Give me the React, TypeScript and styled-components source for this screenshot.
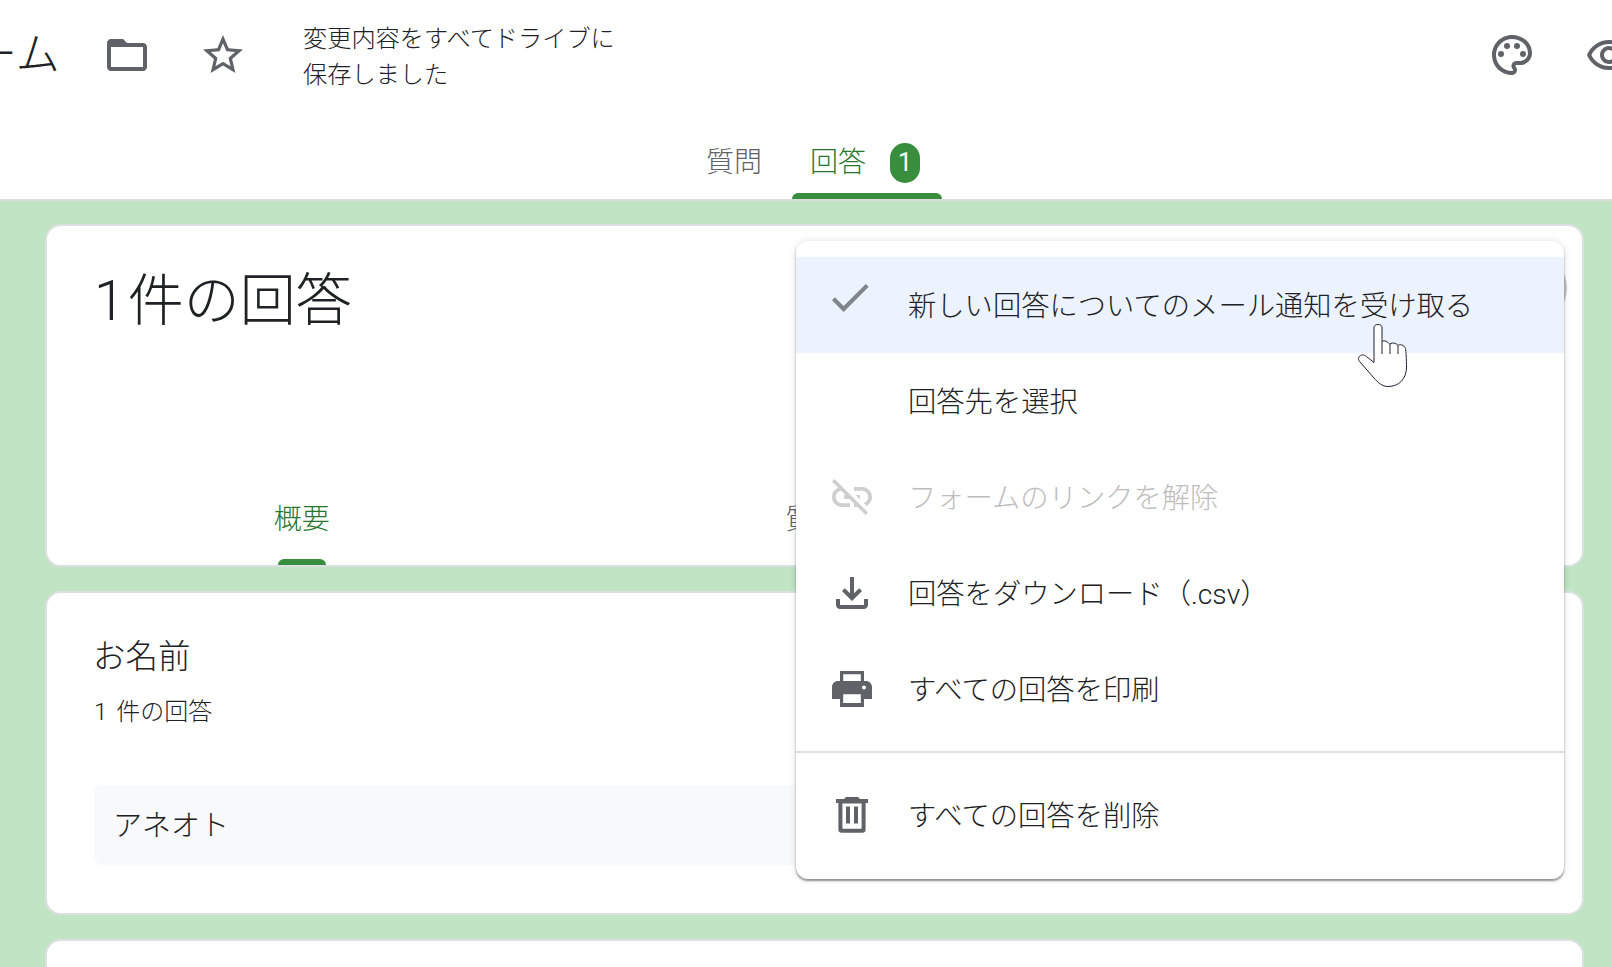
import * as React from "react";
import styled, { createGlobalStyle } from "styled-components";

const VERT = "#388e3c";
const VERT_TEXTE = "#28772e";
const GRIS = "#5f6368";
const TEXTE = "#202124";

const GlobalStyle = createGlobalStyle`
  html, body {
    margin: 0;
    height: 100%;
    overflow: hidden;
    background: #fff;
  }
  body {
    font-family: Roboto, "Noto Sans CJK JP", sans-serif;
    font-weight: 300;
    color: ${TEXTE};
  }
`;

const Page = styled.div`
  position: relative;
  width: 1612px;
  height: 967px;
  overflow: hidden;
  display: flex;
  flex-direction: column;
`;

const Header = styled.header`
  flex: none;
  height: 201px;
  box-sizing: border-box;
  background: #fff;
  border-bottom: 2px solid #dadce0;
  display: flex;
  flex-direction: column;
`;

const TopBar = styled.div`
  flex: none;
  height: 125px;
  box-sizing: border-box;
  padding-bottom: 15px;
  display: flex;
  align-items: center;
`;

const FormTitle = styled.div`
  flex: none;
  width: 176px;
  margin-left: -115px;
  margin-right: 42px;
  font-size: 44px;
  line-height: 56px;
  white-space: nowrap;
`;

const Svg = styled.svg<{ $couleur?: string }>`
  flex: none;
  width: 48px;
  height: 48px;
  fill: ${(p) => p.$couleur ?? GRIS};
`;

const StarIcon = styled(Svg)`
  margin-left: 48px;
`;

const SaveStatus = styled.div`
  flex: none;
  width: 340px;
  margin: 4px 0 0 56px;
  font-size: 24.2px;
  line-height: 36px;
`;

const Spacer = styled.div`
  flex: 1;
`;

const EyeIcon = styled(Svg)`
  margin-left: 49px;
  margin-right: -21px;
`;

const TabRow = styled.nav`
  flex: 1;
  display: flex;
  justify-content: center;
  gap: 10px;
  padding-left: 16px;
`;

const Tab = styled.div<{ $actif?: boolean }>`
  position: relative;
  display: flex;
  align-items: center;
  gap: 24px;
  height: 74px;
  padding: ${(p) => (p.$actif ? "0 22px 0 18px" : "0 20px")};
  font-size: 28px;
  color: ${(p) => (p.$actif ? VERT_TEXTE : GRIS)};
`;

const TabLabel = styled.span`
  margin-top: -4px;
`;

const Badge = styled.span`
  width: 30px;
  height: 40px;
  margin-top: 1px;
  border-radius: 15px;
  background: ${VERT};
  color: #fff;
  font-size: 25px;
  font-weight: 400;
  display: flex;
  align-items: center;
  justify-content: center;
`;

const TabMark = styled.span<{ $large?: number }>`
  position: absolute;
  bottom: 0;
  left: 50%;
  transform: translateX(-50%);
  width: ${(p) => p.$large ?? 150}px;
  height: 6px;
  border-radius: 6px 6px 0 0;
  background: ${VERT};
`;

const Content = styled.main`
  flex: 1;
  min-height: 0;
  background: #c1e4c4;
  padding: 23px 28px 0 45px;
  display: flex;
  flex-direction: column;
  gap: 24px;
`;

const Card = styled.section`
  flex: none;
  position: relative;
  box-sizing: border-box;
  background: #fff;
  border: 2px solid #dde0e3;
  border-radius: 16px;
  overflow: hidden;
`;

const SummaryCard = styled(Card)`
  height: 343px;
  display: flex;
  flex-direction: column;
`;

const ResponseCount = styled.h1`
  margin: 0;
  padding: 43px 0 0 47px;
  font-size: 56px;
  line-height: 64px;
  font-weight: 300;
  word-spacing: -11px;
`;

const MoreHover = styled.div`
  position: absolute;
  top: 26px;
  right: 15px;
  width: 72px;
  height: 72px;
  border-radius: 50%;
  background: #c4c4c4;
`;

const SubTabs = styled.div`
  margin: auto -1px 0 -1px;
  padding-right: 2px;
  display: grid;
  grid-template-columns: repeat(3, 1fr);
`;

const SubTab = styled.div<{ $actif?: boolean }>`
  position: relative;
  height: 96px;
  padding-bottom: 1px;
  box-sizing: border-box;
  display: flex;
  align-items: center;
  justify-content: center;
  font-size: 28px;
  color: ${(p) => (p.$actif ? VERT_TEXTE : GRIS)};
`;

const QuestionCard = styled(Card)`
  height: 324px;
  padding: 44px 48px 0 46px;
`;

const QuestionTitle = styled.h2`
  margin: 0;
  font-size: 32.5px;
  line-height: 40px;
  font-weight: 300;
`;

const QuestionCount = styled.div`
  margin: 19px 0 0 1px;
  font-size: 24px;
  line-height: 32px;
  word-spacing: 3px;
`;

const Answer = styled.div`
  margin: 57px 0 0 1px;
  height: 80px;
  padding: 0 0 4px 19px;
  box-sizing: border-box;
  border-radius: 8px;
  background: #f8f9fa;
  display: flex;
  align-items: center;
  font-size: 29px;
`;

const EmptyCard = styled(Card)`
  height: 200px;
`;

const Menu = styled.div`
  position: absolute;
  top: 241px;
  left: 796px;
  width: 768px;
  padding: 16px 0;
  background: #fff;
  border-radius: 12px;
  box-shadow: 0 2px 2px rgba(60, 64, 67, 0.55), 0 0 7px rgba(60, 64, 67, 0.16);
`;

const MenuItem = styled.div<{ $survol?: boolean; $inactif?: boolean }>`
  height: 96px;
  padding-left: 32px;
  display: flex;
  align-items: center;
  gap: 32px;
  font-size: 28.3px;
  white-space: nowrap;
  background: ${(p) => (p.$survol ? "#ecf3fe" : "transparent")};
  color: ${(p) => (p.$inactif ? "#bdbdbd" : TEXTE)};
`;

const MenuLabel = styled.span`
  margin-top: -4px;
`;

const MenuDivider = styled.hr`
  margin: 14px 0;
  border: 0;
  height: 2px;
  background: #e0e0e0;
`;

const HandCursor = styled.svg`
  position: absolute;
  left: 1358px;
  top: 324px;
  width: 49px;
  height: 63px;
`;

const BlankIcon = styled.span`
  flex: none;
  width: 48px;
  height: 48px;
`;

const Icons = {
  check: (
    <Svg viewBox="1.5 4.2 23 23" $couleur="#80868b">
      <path d="M9 16.2L4.8 12l-1.4 1.4L9 19 21 7l-1.4-1.4L9 16.2z" />
    </Svg>
  ),
  linkOff: (
    <Svg viewBox="0 0 24 24" $couleur="#cfcfcf">
      <path d="M17 7h-4v1.9h4c1.71 0 3.1 1.39 3.1 3.1 0 1.43-.98 2.63-2.31 2.98l1.46 1.46C20.88 15.61 22 13.95 22 12c0-2.76-2.24-5-5-5zm-1 4h-2.19l2 2H16zM2 4.27l3.11 3.11C3.29 8.12 2 9.91 2 12c0 2.76 2.24 5 5 5h4v-1.9H7c-1.71 0-3.1-1.39-3.1-3.1 0-1.59 1.21-2.9 2.76-3.07L8.73 11H8v2h2.73L13 15.27V17h1.73l4.01 4L20 19.74 3.27 3 2 4.27z" />
    </Svg>
  ),
  download: (
    <Svg viewBox="0 0 24 24">
      <path d="M18 15v3H6v-3H4v3c0 1.1.9 2 2 2h12c1.1 0 2-.9 2-2v-3h-2zm-1-4l-1.41-1.41L13 12.17V4h-2v8.17L8.41 9.59 7 11l5 5 5-5z" />
    </Svg>
  ),
  print: (
    <Svg viewBox="0 0 24 24">
      <path d="M6 3h12v5h-1.6V4.6H7.6V8H6z" />
      <path
        fillRule="evenodd"
        d="M5 8h14c1.66 0 3 1.34 3 3v6h-4v4H6v-4H2v-6c0-1.66 1.34-3 3-3zm2.6 6.6V19h8.8v-4.4H7.6zM18 10.3a1 1 0 1 0 0 2 1 1 0 0 0 0-2z"
      />
    </Svg>
  ),
  trash: (
    <Svg viewBox="0 0 24 24">
      <path d="M4 4h4l1-1h6l1 1h4v2H4z" />
      <path
        fillRule="evenodd"
        d="M5.2 6H18.8V19.5c0 .8-.7 1.4-1.5 1.4H6.7c-.8 0-1.5-.6-1.5-1.4V6zM7.2 6.2V18.4c0 .3.2.5.5.5h8.6c.3 0 .5-.2.5-.5V6.2H7.2z"
      />
      <path d="M9 7.8h2v8.4H9zM13 7.8h2v8.4h-2z" />
    </Svg>
  ),
};

export default function App() {
  return (
    <Page>
      <GlobalStyle />
      <Header>
        <TopBar>
          <FormTitle>フォーム</FormTitle>
          <Svg viewBox="0 0 24 24">
            <path d="M20 6h-8l-2-2H4c-1.1 0-1.99.9-1.99 2L2 18c0 1.1.9 2 2 2h16c1.1 0 2-.9 2-2V8c0-1.1-.9-2-2-2zm0 12H4V8h16v10z" />
          </Svg>
          <StarIcon viewBox="0 0 24 24">
            <path d="M22 9.24l-7.19-.62L12 2 9.19 8.63 2 9.24l5.46 4.73L5.82 21 12 17.27 18.18 21l-1.63-7.03L22 9.24zM12 15.4l-3.76 2.27 1-4.28-3.32-2.88 4.38-.38L12 6.1l1.71 4.04 4.38.38-3.32 2.88 1 4.28L12 15.4z" />
          </StarIcon>
          <SaveStatus>
            変更内容をすべてドライブに
            <br />
            保存しました
          </SaveStatus>
          <Spacer />
          <Svg viewBox="0 0 24 24">
            <path d="M12 22C6.49 22 2 17.51 2 12S6.49 2 12 2s10 4.04 10 9c0 3.31-2.69 6-6 6h-1.77c-.28 0-.5.22-.5.5 0 .12.05.23.13.33.41.47.64 1.06.64 1.67 0 1.38-1.12 2.5-2.5 2.5zm0-18c-4.41 0-8 3.59-8 8s3.59 8 8 8c.28 0 .5-.22.5-.5 0-.16-.08-.28-.14-.35-.41-.46-.63-1.05-.63-1.65 0-1.38 1.12-2.5 2.5-2.5H16c2.21 0 4-1.79 4-4 0-3.86-3.59-7-8-7z" />
            <circle cx="6.5" cy="11.5" r="1.5" />
            <circle cx="9.5" cy="7.5" r="1.5" />
            <circle cx="14.5" cy="7.5" r="1.5" />
            <circle cx="17.5" cy="11.5" r="1.5" />
          </Svg>
          <EyeIcon viewBox="0 0 24 24">
            <path d="M12 6.5c3.79 0 7.17 2.13 8.82 5.5-1.65 3.37-5.02 5.5-8.82 5.5S4.83 15.37 3.18 12C4.83 8.63 8.21 6.5 12 6.5m0-2C7 4.5 2.73 7.61 1 12c1.73 4.39 6 7.5 11 7.5s9.27-3.11 11-7.5c-1.73-4.39-6-7.5-11-7.5zm0 5c1.38 0 2.5 1.12 2.5 2.5s-1.12 2.5-2.5 2.5-2.5-1.12-2.5-2.5 1.12-2.5 2.5-2.5m0-2c-2.48 0-4.5 2.02-4.5 4.5s2.02 4.5 4.5 4.5 4.5-2.02 4.5-4.5-2.02-4.5-4.5-4.5z" />
          </EyeIcon>
        </TopBar>
        <TabRow>
          <Tab>
            <TabLabel>質問</TabLabel>
          </Tab>
          <Tab $actif>
            <TabLabel>回答</TabLabel>
            <Badge>1</Badge>
            <TabMark />
          </Tab>
        </TabRow>
      </Header>

      <Content>
        <SummaryCard>
          <ResponseCount>1 件の回答</ResponseCount>
          <MoreHover />
          <SubTabs>
            <SubTab $actif>
              概要
              <TabMark $large={48} />
            </SubTab>
            <SubTab>質問</SubTab>
            <SubTab>個別</SubTab>
          </SubTabs>
        </SummaryCard>
        <QuestionCard>
          <QuestionTitle>お名前</QuestionTitle>
          <QuestionCount>1 件の回答</QuestionCount>
          <Answer>アネオト</Answer>
        </QuestionCard>
        <EmptyCard />
      </Content>

      <Menu>
        <MenuItem $survol>
          {Icons.check}
          <MenuLabel>新しい回答についてのメール通知を受け取る</MenuLabel>
        </MenuItem>
        <MenuItem>
          <BlankIcon />
          <MenuLabel>回答先を選択</MenuLabel>
        </MenuItem>
        <MenuItem $inactif>
          {Icons.linkOff}
          <MenuLabel>フォームのリンクを解除</MenuLabel>
        </MenuItem>
        <MenuItem>
          {Icons.download}
          <MenuLabel>回答をダウンロード（.csv）</MenuLabel>
        </MenuItem>
        <MenuItem>
          {Icons.print}
          <MenuLabel>すべての回答を印刷</MenuLabel>
        </MenuItem>
        <MenuDivider />
        <MenuItem>
          {Icons.trash}
          <MenuLabel>すべての回答を削除</MenuLabel>
        </MenuItem>
      </Menu>

      <HandCursor viewBox="0 0 49 63">
        <path
          d="M16 4C16 1.5 17.5.5 20 .5S24 1.5 24 4V17.5C25 16.5 28 16.5 30 18.5 31 20 32 20 33 19.5 35 18.5 38 19 40 21.5 41.5 20 46 20.5 47.5 24.5 48 27 48.5 36 48.5 43 48.5 55 41 62.5 30 62.5 24 62.5 20 58.5 16 54L2 38C0 36 0 33 2 32 4 30 7 31 9 33L16 38.5Z"
          fill="#fff"
          stroke="#1f2133"
          strokeWidth="1"
        />
        <path d="M24 17.5V30M32 20V30M40 21.5V30" fill="none" stroke="#1f2133" strokeWidth="1" />
      </HandCursor>
    </Page>
  );
}
